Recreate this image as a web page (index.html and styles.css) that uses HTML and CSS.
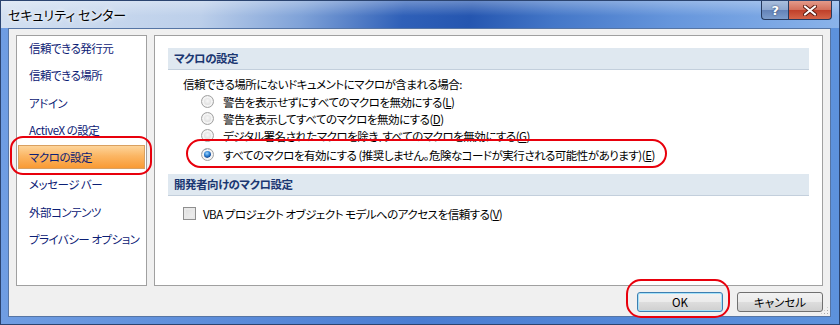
FILE: index.html
```html
<!DOCTYPE html>
<html lang="ja">
<head>
 <meta charset="UTF-8">
 <meta name="viewport" content="width=device-width, initial-scale=1.0">
 <title>セキュリティ センター</title>
 <link rel="stylesheet" href="styles.css">
</head>
<body>
 <div class="window">
 <div class="titlebar">
 <span class="title">セキュリティ センター</span>
 <div class="caption">
 <span class="cap-btn help">?</span>
 <span class="cap-btn close">
 <svg width="14" height="11" viewBox="0 0 14 11"><path d="M2 1.5 L12 9.5 M12 1.5 L2 9.5" stroke="#5a1a10" stroke-width="4" stroke-linecap="round"/><path d="M2 1.5 L12 9.5 M12 1.5 L2 9.5" stroke="#fff" stroke-width="2.2" stroke-linecap="round"/></svg>
 </span>
 </div>
 </div>

 <div class="client">
 <div class="panes">
 <ul class="nav">
 <li>信頼できる発行元</li>
 <li>信頼できる場所</li>
 <li>アドイン</li>
 <li>ActiveX の設定</li>
 <li class="selected">マクロの設定<span class="mark mark-nav"></span></li>
 <li>メッセージ バー</li>
 <li>外部コンテンツ</li>
 <li>プライバシー オプション</li>
 </ul>

 <div class="main">
 <div class="section-head">マクロの設定</div>
 <p class="lead">信頼できる場所にないドキュメントにマクロが含まれる場合:</p>
 <div class="options">
 <label class="option"><span class="radio"></span><span>警告を表示せずにすべてのマクロを無効にする(<u>L</u>)</span></label>
 <label class="option"><span class="radio"></span><span>警告を表示してすべてのマクロを無効にする(<u>D</u>)</span></label>
 <label class="option"><span class="radio"></span><span>デジタル署名されたマクロを除き、すべてのマクロを無効にする(<u>G</u>)</span></label>
 <label class="option picked"><span class="radio on"></span><span>すべてのマクロを有効にする (推奨しません。危険なコードが実行される可能性があります)(<u>E</u>)</span><span class="mark mark-option"></span></label>
 </div>

 <div class="section-head">開発者向けのマクロ設定</div>
 <label class="check-row"><span class="checkbox"></span><span>VBA プロジェクト オブジェクト モデルへのアクセスを信頼する(<u>V</u>)</span></label>
 </div>
 </div>

 <div class="footer">
 <button class="btn default">OK<span class="mark mark-btn"></span></button>
 <button class="btn">キャンセル</button>
 </div>
 <span class="grip"></span>
 </div>
 </div>
</body>
</html>
```

FILE: styles.css
```css
* {
box-sizing: border-box;
}
body {
margin: 0;
width: 840px;
height: 325px;
overflow: hidden;
font-family: "Noto Sans CJK JP", "Noto Sans", sans-serif;
font-size: 11.5px;
letter-spacing: -0.5px;
font-feature-settings: "palt";
color: #000;
}
.window {
width: 840px;
height: 325px;
display: flex;
flex-direction: column;
padding: 0 8px 7px 7px;
border: 1px solid #2b4470;
background: linear-gradient(90deg, #6f9de2 0%, #4a7dd2 50%, #5d92dc 100%);
}
.titlebar {
height: 27px;
margin: 0 -8px 0 -7px;
padding-left: 7px;
display: flex;
align-items: flex-start;
background:
 linear-gradient(180deg, rgba(255,255,255,0.3) 0%, rgba(255,255,255,0) 55%),
 linear-gradient(100deg, #d3e0f1 0%, #bccfea 24%, #7fa2d8 36%, #2f60b8 48%, #2556b0 56%, #4477c8 66%, #6696dc 80%, #8ab3ea 100%);
}
.title {
line-height: 27px;
font-size: 13px;
letter-spacing: 0;
text-shadow: 0 0 6px #fff, 0 0 3px #fff;
}
.caption {
margin-left: auto;
margin-right: 7px;
display: flex;
}
.cap-btn {
height: 19px;
display: flex;
align-items: center;
justify-content: center;
border: 1px solid #263a5e;
border-top: none;
}
.help {
width: 27px;
border-radius: 0 0 0 4px;
border-right: none;
color: #fff;
font: bold 13px "DejaVu Sans", sans-serif;
text-shadow: 0 0 2px #1d3050;
background: linear-gradient(180deg, #a9bedd 0%, #8ea8d0 48%, #6483b8 52%, #7c9dcc 100%);
}
.close {
width: 44px;
border-radius: 0 0 4px 0;
background: linear-gradient(180deg, #e39a8a 0%, #d3705c 48%, #c0402a 52%, #d56448 100%);
}
.client {
flex: 1;
display: flex;
flex-direction: column;
position: relative;
background: #f0f0f0;
border: 1px solid #5675a4;
padding: 6px 7px 0 7px;
}
.panes {
display: flex;
gap: 7px;
height: 251px;
}
.nav {
width: 131px;
margin: 0;
padding: 0 1px;
list-style: none;
background: #fff;
border: 1px solid #a0a0a0;
}
.nav li {
position: relative;
height: 24px;
margin-bottom: 3.3px;
padding-left: 11px;
line-height: 24px;
color: #0c2075;
white-space: nowrap;
}
.nav li.selected {
background: linear-gradient(180deg, #fdd49a 0%, #fbb664 45%, #f99a34 100%);
border: 1px solid #d9a060;
padding-left: 10px;
line-height: 22px;
}
.main {
flex: 1;
background: #fff;
border: 1px solid #a0a0a0;
padding: 12px 13px 0 13px;
}
.section-head {
height: 22px;
padding-left: 6px;
line-height: 21px;
font-weight: bold;
color: #1b3772;
background: #dfe8f0;
border-bottom: 1px solid #c3cfdc;
}
.lead {
margin: 6px 0 0 15px;
line-height: 17px;
}
.options {
display: flex;
flex-direction: column;
align-items: flex-start;
padding-left: 33px;
margin-bottom: 11px;
}
.option {
position: relative;
display: flex;
align-items: center;
gap: 9px;
height: 17px;
white-space: nowrap;
}
.option.picked {
margin-top: 2px;
}
.radio {
flex: none;
width: 13px;
height: 13px;
border-radius: 50%;
border: 1px solid #a2a2a2;
background: radial-gradient(circle at 50% 45%, #f8f8f8 0%, #dcdcdc 55%, #c9c9c9 100%);
box-shadow: inset 0 0 0 2px #f4f4f4;
}
.radio.on {
background: radial-gradient(circle at 45% 40%, #9fd4ff 0%, #2a7fd0 30%, #184c98 45%, #f2f2f2 55%, #d8d8d8 100%);
}
.check-row {
display: flex;
align-items: center;
gap: 7px;
height: 17px;
margin: 9px 0 0 15px;
white-space: nowrap;
}
.checkbox {
flex: none;
width: 13px;
height: 13px;
border: 1px solid #8f8f8f;
background: linear-gradient(135deg, #dcdcdc 0%, #f2f2f2 100%);
box-shadow: inset 0 0 0 2px #e8e8e8;
}
u {
text-decoration-thickness: 1px;
text-underline-offset: 1px;
}
.footer {
display: flex;
justify-content: flex-end;
gap: 14px;
padding-top: 6px;
}
.btn {
position: relative;
width: 86px;
height: 20px;
padding: 0;
border: 1px solid #707070;
border-radius: 3px;
background: linear-gradient(180deg, #f2f2f2 0%, #ebebeb 48%, #dddddd 52%, #cfcfcf 100%);
font: 11.5px "Noto Sans CJK JP", sans-serif;
font-feature-settings: "palt";
color: #000;
}
.btn.default {
border-color: #3c7fb1;
box-shadow: inset 0 0 0 1px #a6e1f8;
}
.mark {
position: absolute;
border: 2px solid #e8000c;
pointer-events: none;
}
.mark-nav {
top: -10px;
bottom: -7px;
left: -9px;
right: -8px;
border-radius: 13px;
}
.mark-option {
top: -7px;
bottom: -5px;
left: -15px;
right: -12px;
border-radius: 16px;
}
.mark-btn {
top: -14px;
bottom: -7px;
left: -12px;
right: -8px;
border-radius: 15px;
}
.grip {
position: absolute;
right: 1px;
bottom: 1px;
width: 9px;
height: 9px;
background: radial-gradient(circle, #a8a8a8 40%, transparent 45%) 0 0 / 3px 3px;
clip-path: polygon(100% 0, 100% 100%, 0 100%);
}
```
